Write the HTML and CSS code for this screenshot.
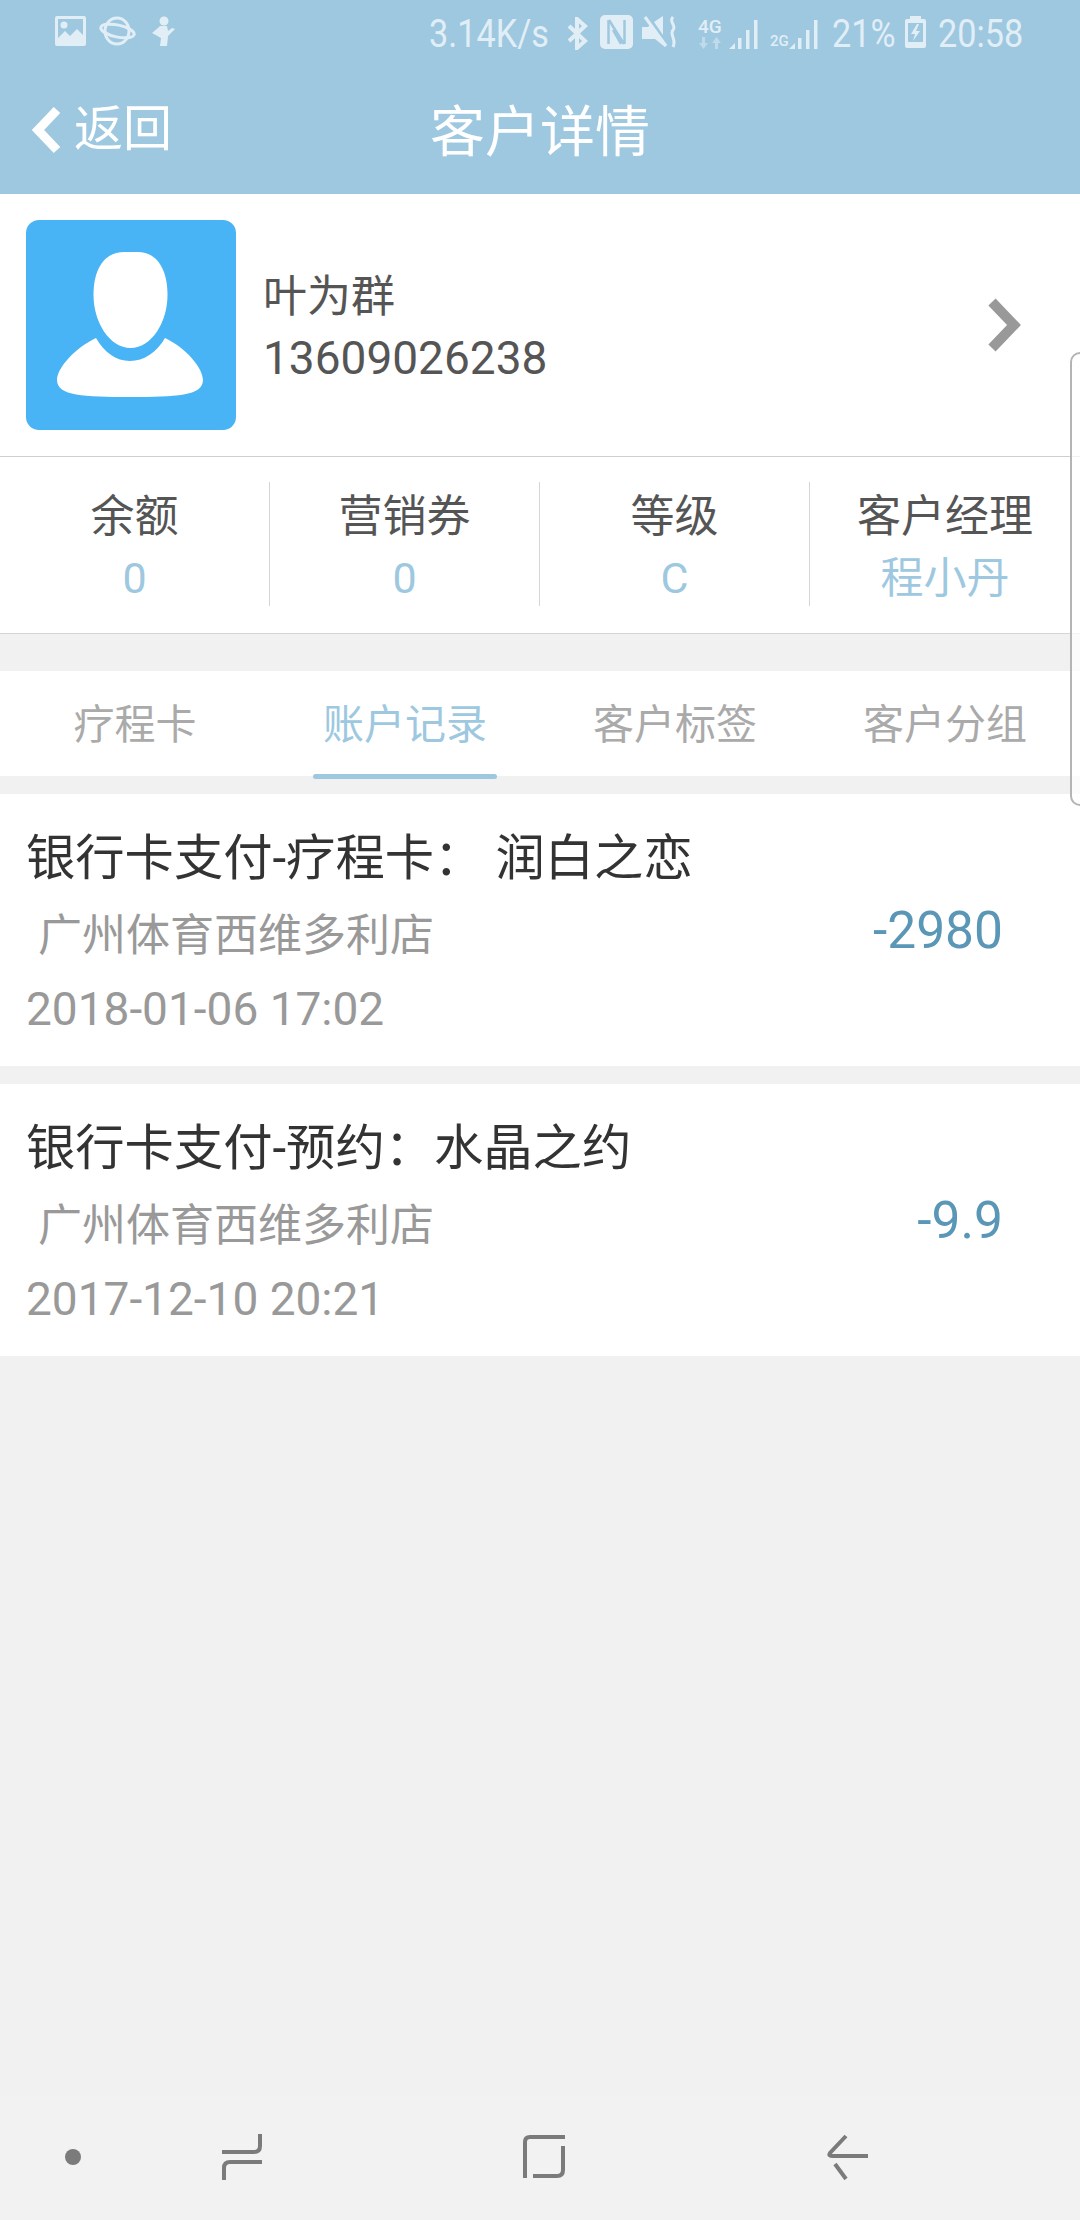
FILE: index.html
```html
<!DOCTYPE html>
<html lang="zh">
<head>
<meta charset="utf-8">
<title>客户详情</title>
<link rel="stylesheet" href="styles.css">
</head>
<body>
<div class="screen">
  <header class="top">
    <div class="status">
      <div class="status-left">
        <svg class="si" width="31" height="30" viewBox="0 0 31 30"><path fill-rule="evenodd" d="M2 0h27a2 2 0 0 1 2 2v26a2 2 0 0 1-2 2H2a2 2 0 0 1-2-2V2a2 2 0 0 1 2-2zM3 3v19l7-7 5 5 7-7 6 6V3z"/><circle cx="9" cy="9" r="3.5"/></svg>
        <svg class="si gap-planet" width="37" height="30" viewBox="0 0 37 30"><ellipse class="ol" cx="18" cy="15" rx="12" ry="13"/><ellipse class="ol" cx="18.500" cy="15" rx="17" ry="6" transform="rotate(12 18.500 15)"/></svg>
        <svg class="si gap-person" width="25" height="30" viewBox="0 0 25 30"><circle cx="13" cy="5" r="4.500"/><path d="M9 10h7l1 5 4-3 3 1-7 7-1 10H9l1-8-9-5 6-5z"/></svg>
      </div>
      <div class="status-right">
        <span class="st st-speed">3.14K/s</span>
        <svg class="si bt" width="21" height="33" viewBox="0 0 21 33"><path class="ol thick" d="M2 9l16 15-8 7V2l8 7L2 24"/></svg>
        <svg class="si nfc" width="33" height="34" viewBox="0 0 33 34"><rect width="33" height="34" rx="5"/><path class="cut" d="M8.500 5v24M24.500 5v24M9 5l15 24M13 15l8 14"/></svg>
        <svg class="si mute" width="36" height="33" viewBox="0 0 36 33"><path d="M0 11h6l2-2 15 18v4l-10-8H0zM12 6l9-6v19z"/><path class="ol" d="M3 1l21 29"/><path class="ol" d="M31 1c-5 5 4 8 0 13s4 9 0 17"/></svg>
        <div class="net">
          <span>4G</span>
          <svg class="si" width="24" height="12" viewBox="0 0 24 12"><path class="faint" d="M4 0h3v6h3l-4.500 6L1 6h3zM17 12h3V6h3l-4.500-6L14 6h3z"/></svg>
        </div>
        <svg class="si sig1" width="32" height="30" viewBox="0 0 32 30"><path d="M0 30l6-6v6zM9 19h3.500v11H9zM17 11h3.500v19H17zM25 1h3.500v29H25z"/></svg>
        <span class="net2">2G</span>
        <svg class="si sig2" width="31" height="30" viewBox="0 0 31 30"><path d="M0 30l6-6v6zM9 19h3.500v11H9zM17 11h3.500v19H17zM25 1h3.500v29H25z"/></svg>
        <span class="st st-pct">21%</span>
        <svg class="si bat" width="21" height="32" viewBox="0 0 21 32"><path fill-rule="evenodd" d="M5 0h11v3h3a2 2 0 0 1 2 2v25a2 2 0 0 1-2 2H2a2 2 0 0 1-2-2V5a2 2 0 0 1 2-2h3zM3 7v19h15V7z"/><path d="M12 8l-6 10h4l-2 7 7-10h-4l3-7z"/></svg>
        <span class="st st-time">20:58</span>
      </div>
    </div>
    <div class="nav">
      <div class="back">
        <svg width="31" height="48" viewBox="0 0 31 48"><path d="M26 4L7 24l19 20" fill="none" stroke="#fff" stroke-width="9"/></svg>
        <span>返回</span>
      </div>
      <div class="title">客户详情</div>
    </div>
  </header>

  <section class="profile">
    <svg class="avatar" width="210" height="210" viewBox="0 0 210 210">
      <rect width="210" height="210" rx="13" fill="#49b4f5"/>
      <path fill="#fff" d="M68 32C47 32 37 50 37 75c0 27 16 53 37 53s37-26 37-53c0-25-10-43-30-43z" transform="translate(30.500 0)"/>
      <path fill="#fff" d="M70 118c8 14 20 23 34 23s27-9 35-23c21 10 38 30 38 42 0 16-27 17-73 17s-73-1-73-17c0-12 18-32 39-42z"/>
    </svg>
    <div class="who">
      <div class="name">叶为群</div>
      <div class="phone">13609026238</div>
    </div>
    <svg class="more" width="34" height="54" viewBox="0 0 34 54"><path d="M4 4l22 23L4 50" fill="none" stroke="#999" stroke-width="10"/></svg>
  </section>

  <section class="stats">
    <div class="stat"><div class="stat-k">余额</div><div class="stat-v">0</div></div>
    <div class="stat"><div class="stat-k">营销券</div><div class="stat-v">0</div></div>
    <div class="stat"><div class="stat-k">等级</div><div class="stat-v">C</div></div>
    <div class="stat"><div class="stat-k">客户经理</div><div class="stat-v">程小丹</div></div>
  </section>

  <nav class="tabs">
    <div class="tab">疗程卡</div>
    <div class="tab active">账户记录</div>
    <div class="tab">客户标签</div>
    <div class="tab">客户分组</div>
  </nav>

  <article class="rec">
    <div class="rec-main">
      <div class="rec-title">银行卡支付-疗程卡<span class="colon">：</span> 润白之恋</div>
      <div class="rec-shop">广州体育西维多利店</div>
      <div class="rec-date">2018-01-06 17:02</div>
    </div>
    <div class="rec-amt">-2980</div>
  </article>
  <article class="rec">
    <div class="rec-main">
      <div class="rec-title">银行卡支付-预约<span class="colon">：</span>水晶之约</div>
      <div class="rec-shop">广州体育西维多利店</div>
      <div class="rec-date">2017-12-10 20:21</div>
    </div>
    <div class="rec-amt">-9.9</div>
  </article>

  <footer class="sysbar">
    <svg width="16" height="16" viewBox="0 0 16 16"><circle cx="8" cy="8" r="8" fill="#7b7b7b"/></svg>
    <svg width="42" height="48" viewBox="0 0 42 48"><path d="M1 19h32q6 0 6-6V1M41 29H9q-6 0-6 6v12" fill="none" stroke="#7b7b7b" stroke-width="4"/></svg>
    <svg width="44" height="46" viewBox="0 0 44 46"><path d="M43 2H8Q3 2 3 7v36M41 11v24q0 6-6 6H11" fill="none" stroke="#7b7b7b" stroke-width="4"/></svg>
    <svg width="42" height="46" viewBox="0 0 42 46"><path d="M20 2L4 19q-2 3 2 3h36M9 30l11 15" fill="none" stroke="#7b7b7b" stroke-width="4"/></svg>
  </footer>

  <div class="handle"></div>
</div>
</body>
</html>
```

FILE: styles.css
```css
* { box-sizing: border-box; }
html, body { margin: 0; padding: 0; }
body {
  width: 1080px;
  height: 2220px;
  overflow: hidden;
  background: #f1f1f1;
  font-family: Roboto, "Noto Sans CJK SC", sans-serif;
}
.screen {
  position: relative;
  width: 1080px;
  height: 2220px;
  display: flex;
  flex-direction: column;
}

/* header */
.top { background: #9dc8e0; height: 194px; }
.status {
  height: 66px;
  padding: 16px 59px 0 55px;
  display: flex;
  justify-content: space-between;
  align-items: flex-start;
}
.status-left, .status-right { display: flex; align-items: flex-start; }
.si { fill: #e2eef6; flex: none; }
.si .ol { fill: none; stroke: #e2eef6; stroke-width: 3; }
.si .thick { stroke-width: 4; }
.si .cut { fill: none; stroke: #9dc8e0; stroke-width: 2.500; }
.si .faint { opacity: .5; }
.st {
  display: inline-block;
  color: #e2eef6;
  font-size: 38px;
  line-height: 36px;
  transform-origin: left top;
  transform: scaleX(.9);
  white-space: nowrap;
}
.gap-planet { margin-left: 13px; }
.gap-person { margin-left: 15px; }
.st-speed { width: 118px; }
.st-pct { width: 61px; margin-left: 12px; }
.st-time { width: 83px; margin-left: 12px; }
.bt { margin: 1px 12px 0 20px; }
.nfc { margin-top: -1px; }
.mute { margin: 0 0 0 9px; }
.net {
  width: 24px;
  margin: 0 0 0 20px;
  color: #e2eef6;
  font-size: 19px;
  line-height: 22px;
  font-weight: 500;
  white-space: nowrap;
}
.net .si { display: block; margin-top: -1px; }
.sig1 { margin: 3px 0 0 7px; }
.net2 {
  width: 17px;
  margin: 17px 2px 0 9px;
  color: #e2eef6;
  font-size: 15px;
  line-height: 16px;
  font-weight: 500;
}
.sig2 { margin-top: 3px; }
.bat { margin-left: 12px; }

.nav { position: relative; height: 128px; display: flex; align-items: center; justify-content: center; }
.back {
  position: absolute;
  left: 31px;
  top: 30px;
  display: flex;
  align-items: center;
  color: #fff;
  font-size: 49px;
  line-height: 68px;
}
.back span { margin-left: 12px; }
.title { color: #fff; font-size: 55px; line-height: 76px; margin-top: 4px; }

/* profile */
.profile {
  height: 263px;
  background: #fff;
  border-bottom: 1px solid #cfcfcf;
  padding: 26px 58px 0 26px;
  display: flex;
  align-items: flex-start;
}
.who { margin: 46px 0 0 27px; flex: 1; }
.name { color: #555; font-size: 44px; line-height: 62px; }
.phone { color: #555; font-size: 46px; line-height: 62px; margin-top: -1px; }
.more { margin-top: 78px; }

/* stats */
.stats {
  height: 177px;
  background: #fff;
  border-bottom: 1px solid #d5d5d5;
  padding-top: 25px;
  display: grid;
  grid-template-columns: repeat(4, 270px);
}
.stat {
  height: 124px;
  border-right: 1px solid #d5d5d5;
  text-align: center;
}
.stat:last-child { border-right: 0; }
.stat-k { color: #555; font-size: 44px; line-height: 64px; margin-top: 3px; }
.stat-v { color: #9dc8e0; font-size: 43px; line-height: 58px; }

/* tabs */
.tabs {
  margin-top: 37px;
  height: 105px;
  background: #fff;
  display: grid;
  grid-template-columns: repeat(4, 270px);
}
.tab {
  position: relative;
  color: #aaa;
  font-size: 41px;
  line-height: 108px;
  text-align: center;
}
.tab.active { color: #9dc8e0; }
.tab.active::after {
  content: "";
  position: absolute;
  left: 43px;
  right: 43px;
  bottom: 0;
  height: 5px;
  border-radius: 3px;
  background: #9dc8e0;
}

/* records */
.rec {
  height: 272px;
  margin-top: 18px;
  background: #fff;
  padding: 27px 77px 0 26px;
  display: flex;
  justify-content: space-between;
  align-items: center;
}
.rec-main { align-self: flex-start; }
.rec-title { color: #333; font-size: 49.300px; line-height: 66px; white-space: pre; }
.colon { font-family: "Noto Sans CJK TC", sans-serif; }
.rec-shop { color: #999; font-size: 44px; line-height: 62px; margin: 14px 0 0 12px; }
.rec-date { color: #999; font-size: 46px; line-height: 62px; margin-top: 11px; }
.rec-amt { color: #5a96b6; font-size: 51.500px; margin-top: -26px; }

/* system bar */
.sysbar {
  position: absolute;
  left: 0;
  right: 0;
  bottom: 0;
  height: 125px;
  background: #f2f2f2;
}
.sysbar svg { position: absolute; }
.sysbar svg:nth-child(1) { left: 65px; top: 54px; }
.sysbar svg:nth-child(2) { left: 221px; top: 38px; }
.sysbar svg:nth-child(3) { left: 522px; top: 40px; }
.sysbar svg:nth-child(4) { left: 826px; top: 39px; }

/* edge handle */
.handle {
  position: absolute;
  left: 1070px;
  top: 352px;
  width: 20px;
  height: 454px;
  border: 2px solid #b4b4b4;
  border-radius: 14px;
  background: rgba(255,255,255,.7);
}
```
